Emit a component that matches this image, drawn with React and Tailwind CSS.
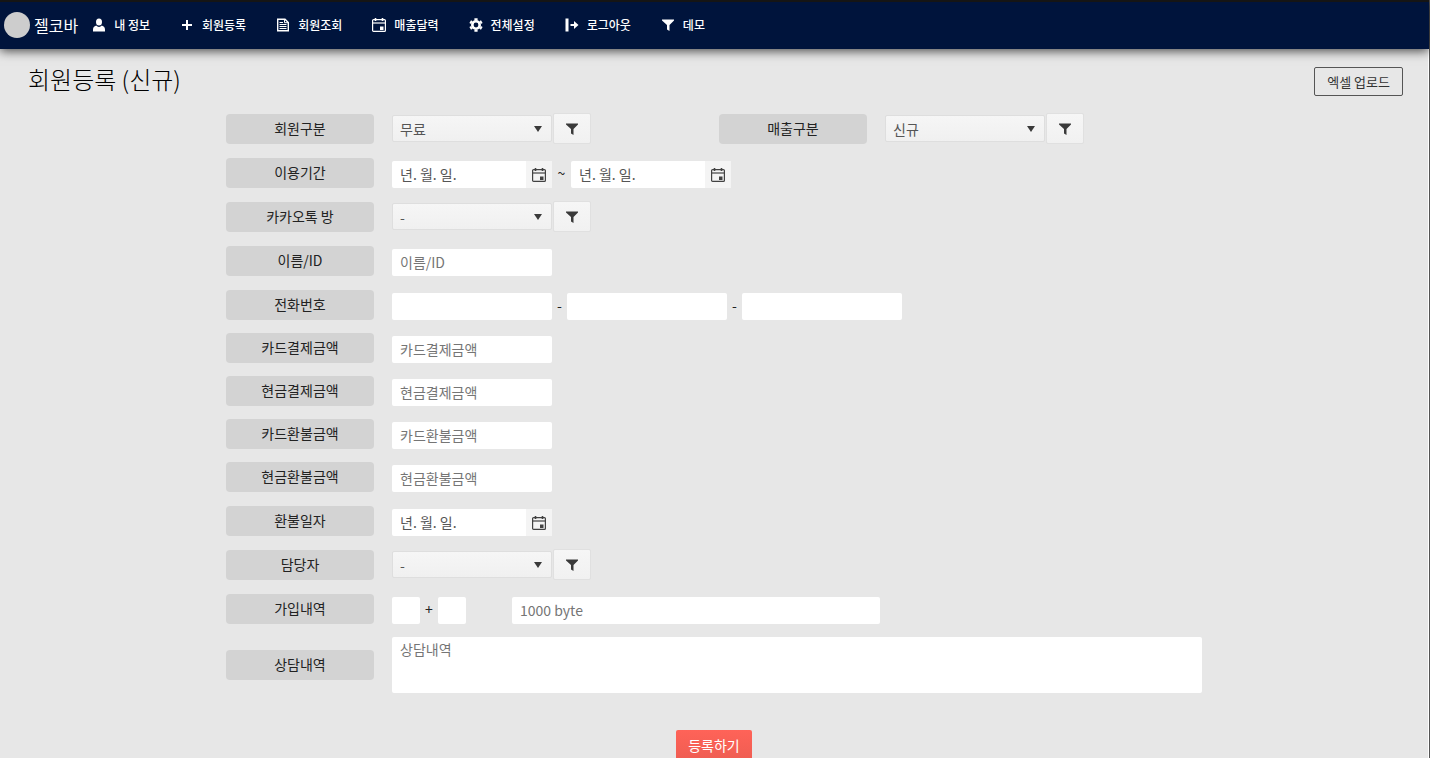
import clsx from "clsx";

function UserIcon() {
  return (
    <svg viewBox="0 0 16 16" className="h-4 w-4 shrink-0" fill="currentColor">
      <ellipse cx="8" cy="4.900" rx="3" ry="3.500" />
      <path d="M5.200 8.600C3 9.300 2 10.800 2 12.800V14.500h12v-1.700c0-2-1-3.500-3.200-4.200C10 9.500 9.100 9.900 8 9.900S6 9.500 5.200 8.600z" />
    </svg>
  );
}

function PlusIcon() {
  return (
    <svg viewBox="0 0 16 16" className="h-4 w-4 shrink-0" fill="currentColor">
      <path d="M7 3h2v4h4v2H9v4H7V9H3V7h4z" />
    </svg>
  );
}

function FileIcon() {
  return (
    <svg viewBox="0 0 16 16" className="h-4 w-4 shrink-0" fill="none" stroke="currentColor">
      <path d="M2.700 2.200h7.300l3.300 3.300v8.300H2.700z" strokeWidth="1.400" />
      <path d="M9.500 2.200v3.500h3.800M4.500 5.500h3.500M4.500 7.500h7M4.500 9.500h7M4.500 11.500h7" />
    </svg>
  );
}

function CalendarIcon() {
  return (
    <svg viewBox="0 0 16 16" className="h-4 w-4 shrink-0" fill="none" stroke="currentColor">
      <rect x="1.600" y="2.600" width="12.800" height="11.800" rx="1" strokeWidth="1.200" />
      <path d="M1.600 6h12.800" strokeWidth="1.200" />
      <path d="M4.500 1v3M11.500 1v3" strokeWidth="1.600" />
      <path d="M9 9.500h3.500V13H9z" fill="currentColor" stroke="none" />
    </svg>
  );
}

function GearIcon() {
  return (
    <svg viewBox="0 0 16 16" className="h-4 w-4 shrink-0" fill="none" stroke="currentColor">
      <circle cx="8" cy="8" r="3.700" strokeWidth="2.600" />
      <path d="M8 1.300v2M8 12.700v2M2.200 4.650l1.700 1M12.100 10.350l1.700 1M2.200 11.350l1.700-1M12.100 5.650l1.700-1" strokeWidth="3.200" />
    </svg>
  );
}

function LogoutIcon() {
  return (
    <svg viewBox="0 0 16 16" className="h-4 w-4 shrink-0" fill="currentColor">
      <path d="M1.500 1.500h3v13h-3zM6.500 7H10V4l4.500 4L10 12V9H6.500z" />
    </svg>
  );
}

function FilterIcon() {
  return (
    <svg viewBox="0 0 16 16" className="h-4 w-4 shrink-0" fill="currentColor">
      <path d="M2 2.500h12v1L9.500 8v6L7 12.500V8L2 3.500z" />
    </svg>
  );
}

const menus = [
  { label: "내 정보", Icon: UserIcon },
  { label: "회원등록", Icon: PlusIcon },
  { label: "회원조회", Icon: FileIcon },
  { label: "매출달력", Icon: CalendarIcon },
  { label: "전체설정", Icon: GearIcon },
  { label: "로그아웃", Icon: LogoutIcon },
  { label: "데모", Icon: FilterIcon },
];

const amounts = [
  { id: "card-pay", label: "카드결제금액" },
  { id: "cash-pay", label: "현금결제금액" },
  { id: "card-refund", label: "카드환불금액" },
  { id: "cash-refund", label: "현금환불금액" },
];

function Header() {
  return (
    <header className="relative flex h-[49px] items-center border-t-2 border-[#151515] bg-[#00143c] pb-0.5 pl-1 text-white shadow-[0_2px_10px_rgba(0,0,0,0.7)]">
      <span className="h-[26px] w-[26px] rounded-full bg-[#cdcdcd]" />
      <span className="ml-1 text-base leading-6">젤코바</span>
      <nav className="ml-3.5 flex gap-[30px]">
        {menus.map(({ label, Icon }) => (
          <a key={label} href="#" className="flex items-center gap-2 text-xs font-medium whitespace-nowrap">
            <span className="flex w-3.5 justify-center">
              <Icon />
            </span>
            {label}
          </a>
        ))}
      </nav>
    </header>
  );
}

function Row({ id, label, tall, children }) {
  return (
    <div className={clsx("flex items-end gap-[18px]", tall ? "min-h-[31px]" : "min-h-[30px]")}>
      <label
        htmlFor={id}
        className="h-[30px] w-[148px] shrink-0 self-center rounded bg-[#d3d3d3] text-center text-sm leading-7 text-[#222]"
      >
        {label}
      </label>
      {children}
    </div>
  );
}

function TextBox({ className = "w-40", ...props }) {
  return (
    <input
      type="text"
      className={clsx("h-[27px] rounded-xs bg-white px-2 pb-0.5 text-sm text-[#444] placeholder:text-[#757575]", className)}
      {...props}
    />
  );
}

function DateBox({ id, label }) {
  return (
    <div className="flex h-[27px] w-40 rounded-xs bg-white">
      <input
        id={id}
        type="text"
        aria-label={label}
        placeholder="년. 월. 일."
        className="min-w-0 flex-1 px-2 pb-0.5 text-sm placeholder:text-[#555]"
      />
      <button type="button" aria-label="달력" className="flex w-[26px] items-center justify-center bg-[#f4f4f4] text-[#424242]">
        <CalendarIcon />
      </button>
    </div>
  );
}

function SelectBox({ id, value }) {
  return (
    <div className="flex items-center gap-px">
      <div className="relative">
        <select
          id={id}
          className="block h-[27px] w-40 appearance-none rounded-xs border border-[#dedede] bg-linear-to-b from-[#f6f6f6] to-[#f0f0f0] px-[7px] text-sm leading-6 text-[#555]"
        >
          <option>{value}</option>
        </select>
        <svg viewBox="0 0 8 6" className="pointer-events-none absolute top-[11px] right-2.5 h-1.5 w-2" fill="#3a3a3a">
          <path d="M0 0h8L4 6z" />
        </svg>
      </div>
      <button
        type="button"
        aria-label="필터"
        className="flex h-[31px] w-[38px] items-center justify-center rounded-xs border border-[#e0e0e0] bg-linear-to-b from-[#f6f6f6] to-[#f1f1f1] text-[#3a3a3a]"
      >
        <FilterIcon />
      </button>
    </div>
  );
}

function Separator({ className, children }) {
  return <span className={clsx("text-center text-sm leading-6 text-[#222]", className)}>{children}</span>;
}

export default function App() {
  return (
    <div className="min-h-screen border-r border-[#555] bg-[#e7e7e7] font-['Noto_Sans_CJK_KR',sans-serif]">
      <Header />
      <main className="border-r border-white pt-[18px]">
        <div className="flex h-[29px] items-start justify-between pr-[25px] pl-7">
          <h1 className="text-2xl leading-6 font-light text-black">회원등록 (신규)</h1>
          <button type="button" className="h-[29px] rounded-xs border border-[#555] px-3 text-[13px] text-[#333]">
            엑셀 업로드
          </button>
        </div>

        <form className="mx-auto mt-[17px] flex max-w-[976px] flex-col gap-[13px]">
          <div className="grid grid-cols-2 gap-2.5">
            <Row id="member-type" label="회원구분" tall>
              <SelectBox id="member-type" value="무료" />
            </Row>
            <Row id="sale-type" label="매출구분" tall>
              <SelectBox id="sale-type" value="신규" />
            </Row>
          </div>
          <Row id="period-from" label="이용기간" tall>
            <div className="flex">
              <DateBox id="period-from" />
              <Separator className="w-[19px]">~</Separator>
              <DateBox label="이용기간 종료일" />
            </div>
          </Row>
          <Row id="kakao" label="카카오톡 방" tall>
            <SelectBox id="kakao" value="-" />
          </Row>
          <Row id="name" label="이름/ID" tall>
            <TextBox id="name" placeholder="이름/ID" />
          </Row>
          <Row id="phone" label="전화번호" tall>
            <div className="flex">
              <TextBox id="phone" />
              <Separator className="w-[15px]">-</Separator>
              <TextBox aria-label="전화번호 가운데 자리" />
              <Separator className="w-[15px]">-</Separator>
              <TextBox aria-label="전화번호 끝자리" />
            </div>
          </Row>
          {amounts.map(({ id, label }) => (
            <Row key={id} id={id} label={label}>
              <TextBox id={id} placeholder={label} />
            </Row>
          ))}
          <Row id="refund-date" label="환불일자" tall>
            <DateBox id="refund-date" />
          </Row>
          <Row id="manager" label="담당자" tall>
            <SelectBox id="manager" value="-" />
          </Row>
          <Row id="months" label="가입내역" tall>
            <div className="flex">
              <TextBox id="months" className="w-7" />
              <Separator className="w-[18px]">+</Separator>
              <TextBox aria-label="추가 기간" className="w-7" />
              <TextBox aria-label="가입내역 메모" placeholder="1000 byte" className="ml-[46px] w-[368px]" />
            </div>
          </Row>
          <Row id="memo" label="상담내역">
            <textarea
              id="memo"
              placeholder="상담내역"
              className="h-14 flex-1 resize-none rounded-xs bg-white px-2 py-0.5 text-sm placeholder:text-[#757575]"
            />
          </Row>
          <button
            type="submit"
            className="mt-6 h-[30px] self-center rounded-xs bg-linear-to-b from-[#ff6358] to-[#ef5d52] px-3 text-sm text-white"
          >
            등록하기
          </button>
        </form>
      </main>
    </div>
  );
}
